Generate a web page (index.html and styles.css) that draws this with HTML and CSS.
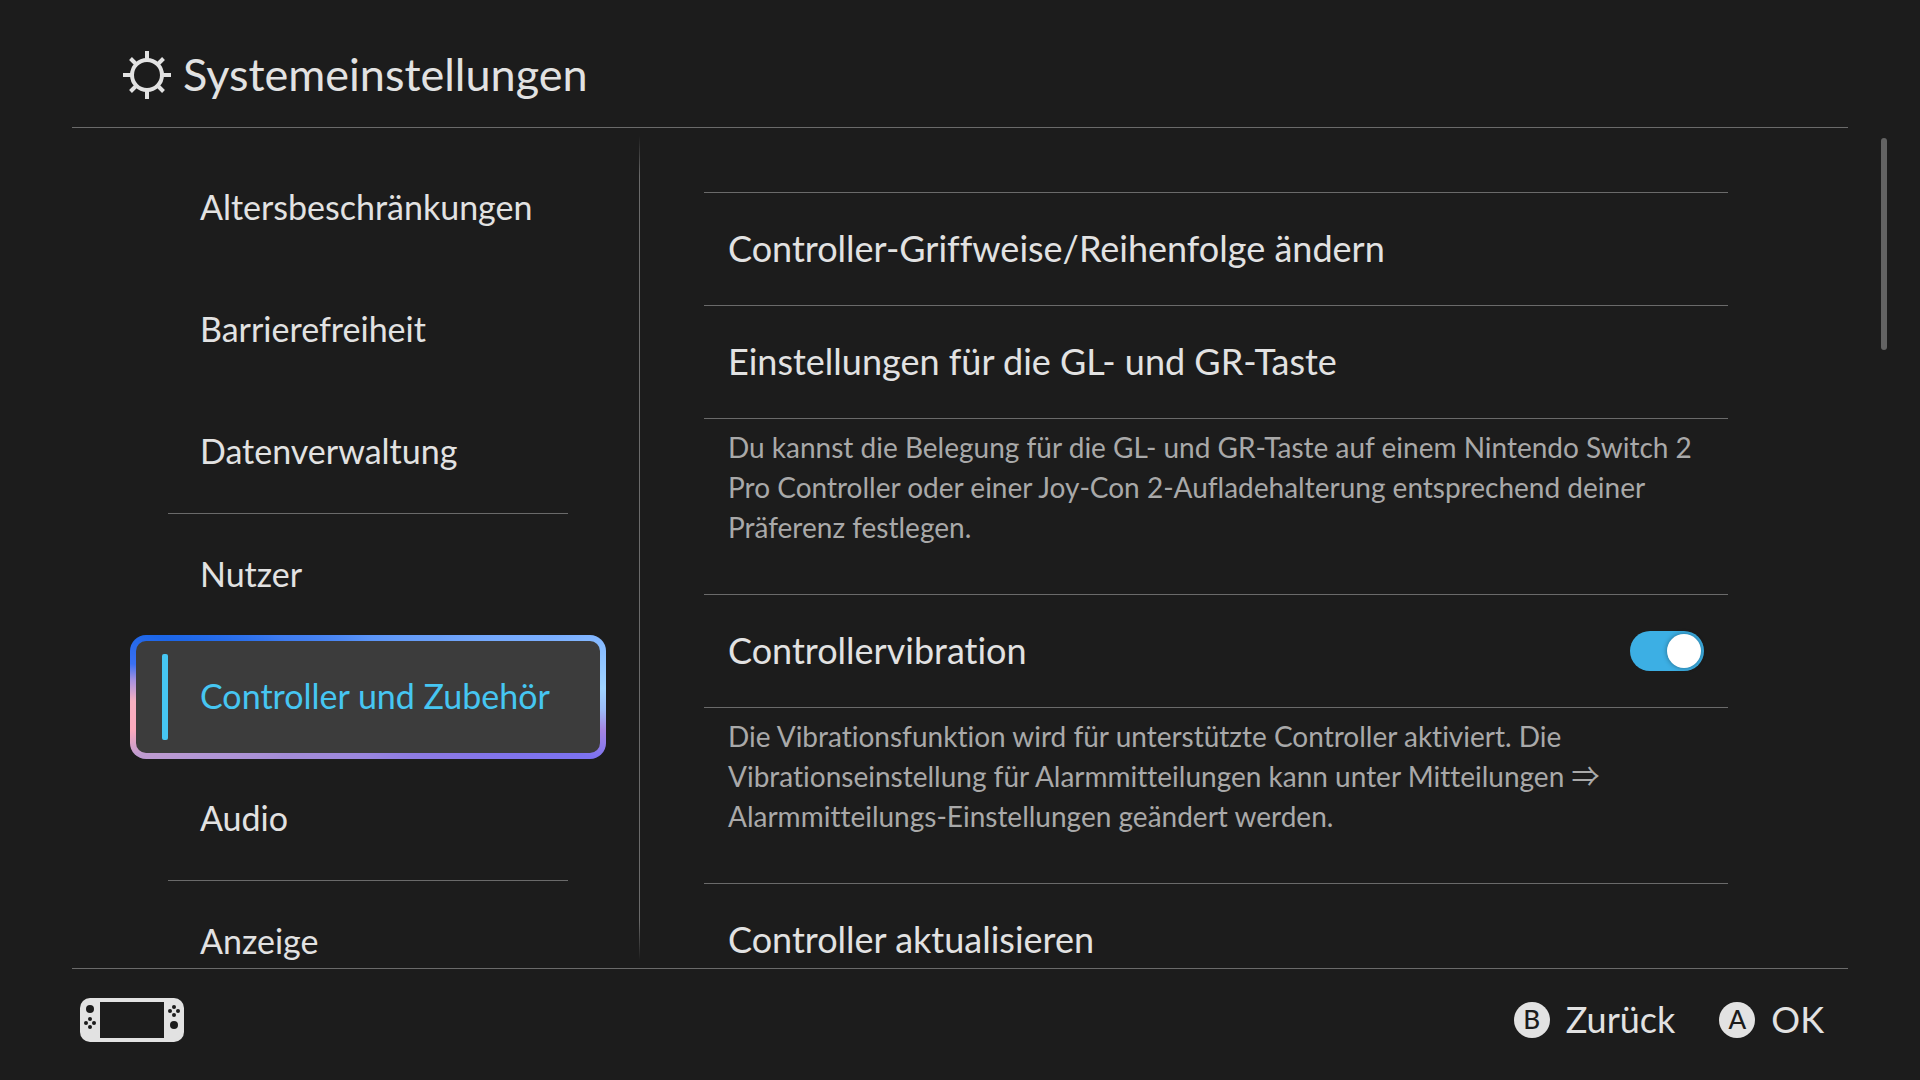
FILE: index.html
```html
<!DOCTYPE html>
<html lang="de">
<head>
<meta charset="utf-8">
<title>Systemeinstellungen</title>
<link rel="stylesheet" href="styles.css">
</head>
<body>
<header class="header">
  <svg class="header-icon" width="48" height="48" viewBox="-24 -24 48 48" fill="none" stroke="currentColor" stroke-width="4" aria-hidden="true">
    <circle r="15"/>
    <path d="M0-24V-16M0 24V16M-24 0H-16M24 0H16M-16.500-16.500L-11-11M16.500 16.500L11 11M-16.500 16.500L-11 11M16.500-16.500L11-11"/>
  </svg>
  <h1 class="title">Systemeinstellungen</h1>
</header>

<main class="main">
  <nav class="sidebar">
    <ul class="menu">
      <li><a class="menu-item" href="#alter">Altersbeschränkungen</a></li>
      <li><a class="menu-item" href="#barrierefreiheit">Barrierefreiheit</a></li>
      <li><a class="menu-item" href="#daten">Datenverwaltung</a></li>
      <li class="menu-group"><a class="menu-item" href="#nutzer">Nutzer</a></li>
      <li><a class="menu-item selected" href="#controller" aria-current="page">Controller und Zubehör</a></li>
      <li><a class="menu-item" href="#audio">Audio</a></li>
      <li class="menu-group"><a class="menu-item" href="#anzeige">Anzeige</a></li>
    </ul>
  </nav>
  <section class="content">
    <button class="row" type="button">Controller-Griffweise/Reihenfolge ändern</button>
    <button class="row" type="button">Einstellungen für die GL- und GR-Taste</button>
    <p class="note">Du kannst die Belegung für die GL- und GR-Taste auf einem Nintendo Switch 2 Pro Controller oder einer Joy-Con 2-Aufladehalterung entsprechend deiner Präferenz festlegen.</p>
    <div class="row">
      <label for="vibration">Controllervibration</label>
      <input class="switch" id="vibration" type="checkbox" role="switch" checked>
    </div>
    <p class="note">Die Vibrationsfunktion wird für unterstützte Controller aktiviert. Die Vibrationseinstellung für Alarmmitteilungen kann unter Mitteilungen ⇒ Alarmmitteilungs-Einstellungen geändert werden.</p>
    <button class="row" type="button">Controller aktualisieren</button>
  </section>
  <div class="scrollbar"></div>
</main>

<footer class="footer">
  <svg class="console" width="104" height="44" viewBox="0 0 104 44" aria-hidden="true">
    <rect width="104" height="44" rx="10" fill="#e2e2e2"/>
    <g fill="#1c1c1c">
      <rect x="20" y="4" width="64" height="36"/>
      <circle cx="10" cy="11" r="4"/>
      <circle cx="10" cy="21" r="2"/><circle cx="10" cy="29" r="2"/><circle cx="6" cy="25" r="2"/><circle cx="14" cy="25" r="2"/>
      <circle cx="94" cy="9" r="2"/><circle cx="94" cy="17" r="2"/><circle cx="90" cy="13" r="2"/><circle cx="98" cy="13" r="2"/>
      <circle cx="94" cy="27" r="4"/>
    </g>
  </svg>
  <div class="actions">
    <button class="action" type="button"><span class="key">B</span><span class="action-label">Zurück</span></button>
    <button class="action" type="button"><span class="key">A</span><span class="action-label">OK</span></button>
  </div>
</footer>
</body>
</html>
```
FILE: styles.css
```css
:root {
  --bg: #1c1c1c;
  --text: #e2e2e2;
  --muted: #a9a9a9;
  --line: #6a6a6a;
  --accent: #46c6f2;
}

* { box-sizing: border-box; }

body {
  margin: 0;
  height: 100vh;
  display: flex;
  flex-direction: column;
  overflow: hidden;
  background: var(--bg);
  color: var(--text);
  font-family: Lato, "Noto Sans CJK JP", sans-serif;
  font-variant-ligatures: none;
}

button {
  border: 0;
  padding: 0;
  background: none;
  color: inherit;
  font: inherit;
  text-align: left;
}

a { color: inherit; text-decoration: none; }

.header {
  flex: none;
  display: flex;
  align-items: center;
  gap: 12px;
  height: 128px;
  margin: 0 72px;
  padding: 24px 51px 0;
  border-bottom: 1px solid var(--line);
}

.header-icon { margin-bottom: 1px; }

.title {
  margin: 0;
  padding-bottom: 4px;
  font-size: 45px;
  line-height: 60px;
  font-weight: 400;
}

.main {
  position: relative;
  flex: 1;
  min-height: 0;
  display: flex;
  margin: 0 72px;
  clip-path: inset(0 -72px);
}

.sidebar {
  position: relative;
  flex: none;
  width: 568px;
  padding: 19px 34px 0 58px;
}

.sidebar::after {
  content: "";
  position: absolute;
  top: 8px;
  bottom: 8px;
  right: 0;
  width: 1px;
  background: linear-gradient(transparent, var(--line) 40px, var(--line) calc(100% - 40px), transparent);
}

.menu { margin: 0; padding: 0; list-style: none; }

.menu-group::before {
  content: "";
  display: block;
  height: 1px;
  margin: 0 38px;
  background: var(--line);
}

.menu-item {
  position: relative;
  display: flex;
  align-items: center;
  height: 122px;
  padding: 0 0 4px 70px;
  font-size: 34px;
  white-space: nowrap;
}

.selected { color: var(--accent); }

.selected::before {
  content: "";
  position: absolute;
  z-index: -1;
  inset: -1px 0;
  border: 6px solid transparent;
  border-radius: 16px;
  background:
    linear-gradient(#3c3c3c, #3c3c3c) padding-box,
    conic-gradient(#5a94f8, #6a9ff8 50deg, #7aaeff 72deg, #a0d4ff 88deg, #9cbcf8 93deg, #a585e2 98deg, #7c72f0 105deg, #8a78e6 125deg, #9a86e0 180deg, #a48cd8 235deg, #b296d6 250deg, #c09cd0 256deg, #fcaabd 262deg, #f6b0c0 269deg, #a892e0 274deg, #3a70f2 278deg, #1c66e8 286deg, #3f7cf0 305deg, #5a94f8) border-box;
}

.selected::after {
  content: "";
  position: absolute;
  left: 32px;
  top: 18px;
  bottom: 18px;
  width: 6px;
  border-radius: 2px;
  background: var(--accent);
}

.content {
  flex: 1;
  min-width: 0;
  padding: 64px 120px 0 64px;
}

.row {
  display: flex;
  align-items: center;
  justify-content: space-between;
  width: 100%;
  height: 113px;
  padding: 0 24px 2px;
  border-top: 1px solid var(--line);
  font-size: 36px;
}

.note {
  margin: 0;
  height: 176px;
  padding: 8px 24px 0;
  border-top: 1px solid var(--line);
  color: var(--muted);
  font-size: 28px;
  line-height: 40px;
}

.switch {
  appearance: none;
  width: 74px;
  height: 40px;
  margin: 2px 0 0;
  padding: 3px;
  border-radius: 20px;
  background: #777;
}

.switch::before {
  content: "";
  display: block;
  width: 34px;
  height: 34px;
  border-radius: 50%;
  background: #fff;
  box-shadow: 0 0 5px rgba(0, 0, 0, 0.4);
}

.switch:checked { background: #3cafe4; }
.switch:checked::before { margin-left: auto; }

.scrollbar {
  position: absolute;
  top: 10px;
  right: -39px;
  width: 6px;
  height: 212px;
  border-radius: 3px;
  background: #636363;
}

.footer {
  flex: none;
  display: flex;
  align-items: center;
  justify-content: space-between;
  height: 112px;
  margin: 0 72px;
  padding: 0 24px 10px 8px;
  border-top: 1px solid var(--line);
}

.actions { display: flex; gap: 44px; }

.action {
  display: flex;
  align-items: center;
  gap: 16px;
  font-size: 36px;
}

.action-label { padding-bottom: 2px; }

.key {
  width: 36px;
  height: 36px;
  border-radius: 50%;
  background: var(--text);
  color: var(--bg);
  font-size: 26px;
  font-weight: 500;
  line-height: 34px;
  text-align: center;
}
```
